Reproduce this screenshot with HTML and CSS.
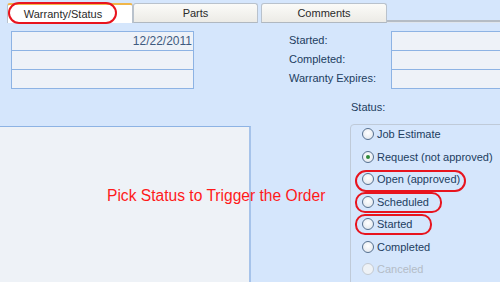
FILE: index.html
```html
<!DOCTYPE html>
<html>
<head>
<meta charset="utf-8">
<link rel="stylesheet" href="styles.css">
</head>
<body>
<div class="page">
  <div class="tabs">
    <div class="tab active">Warranty/Status</div>
    <div class="tab parts">Parts</div>
    <div class="tab comments">Comments</div>
    <div class="tabline"></div>
  </div>
  <div class="row1">
    <div class="fields left">
      <div class="cell date">12/22/2011</div>
      <div class="cell"></div>
      <div class="cell"></div>
    </div>
    <div class="labels">
      <div class="lbl">Started:</div>
      <div class="lbl">Completed:</div>
      <div class="lbl">Warranty Expires:</div>
    </div>
    <div class="fields right">
      <div class="cell"></div>
      <div class="cell"></div>
      <div class="cell"></div>
    </div>
  </div>
  <div class="statuslbl">Status:</div>
  <div class="row3">
    <div class="bigbox"></div>
    <div class="statusbox">
      <div class="opt"><span class="radio"></span>Job Estimate</div>
      <div class="opt"><span class="radio checked"></span>Request (not approved)</div>
      <div class="opt"><span class="radio"></span>Open (approved)</div>
      <div class="opt"><span class="radio"></span>Scheduled</div>
      <div class="opt"><span class="radio"></span>Started</div>
      <div class="opt"><span class="radio"></span>Completed</div>
      <div class="opt disabled"><span class="radio"></span>Canceled</div>
    </div>
  </div>
  <div class="note">Pick Status to Trigger the Order</div>
  <div class="ring r-tab"></div>
  <div class="ring r-open"></div>
  <div class="ring r-sched"></div>
  <div class="ring r-start"></div>
</div>
</body>
</html>
```
FILE: styles.css
```css
html, body {
  margin: 0;
  padding: 0;
}
body {
  background: #d5e6fc;
  font-family: "Liberation Sans", Arial, sans-serif;
  font-size: 11px;
  overflow: hidden;
}
.page {
  position: relative;
  width: 500px;
  height: 282px;
  overflow: hidden;
}
.tabs {
  display: flex;
  align-items: flex-end;
  height: 23px;
  padding-left: 7px;
}
.tab {
  flex-shrink: 0;
  box-sizing: border-box;
  height: 20px;
  width: 126px;
  border: 1px solid #b9c2cc;
  border-radius: 3px 3px 0 0;
  background: linear-gradient(#fbfbf8, #ecebe6);
  color: #2a2a2a;
  text-align: center;
  line-height: 19px;
  font-size: 11px;
  border-bottom: 1px solid #b0b8c0;
}
.tab.active {
  height: 20px;
  background: #ffffff;
  border-top: 2px solid #f0b64a;
  border-bottom: none;
  line-height: 18px;
  width: 126px;
  padding-right: 14px;
}
.tab.parts {
  width: 125px;
}
.tab.comments {
  margin-left: 3px;
  width: 126px;
}
.tabline {
  flex: 1;
  height: 2px;
  background: #b5bcc4;
  border-bottom: 1px solid #dfe5ec;
}
.row1 {
  display: flex;
  margin-top: 8px;
}
.fields {
  flex-shrink: 0;
  box-sizing: border-box;
  border: 1px solid #8db3e4;
  background: #eef2f8;
  display: flex;
  flex-direction: column;
}
.fields.left {
  margin-left: 11px;
  width: 183px;
}
.fields.right {
  width: 115px;
}
.cell {
  height: 18px;
  border-bottom: 1px solid #8db3e4;
  color: #3f5b80;
  font-size: 12px;
  line-height: 19px;
}
.cell:last-child {
  border-bottom: none;
}
.cell.date {
  text-align: right;
  padding-right: 1px;
}
.labels {
  flex-shrink: 0;
  width: 102px;
  margin-left: 95px;
  display: flex;
  flex-direction: column;
  color: #213d5f;
}
.lbl {
  height: 19px;
  line-height: 18px;
}
.statuslbl {
  margin: 11px 0 0 351px;
  color: #213d5f;
  height: 14px;
  line-height: 14px;
}
.row3 {
  display: flex;
  margin-top: 10px;
}
.bigbox {
  flex-shrink: 0;
  box-sizing: border-box;
  width: 251px;
  height: 170px;
  margin-top: 2px;
  background: #eef2f7;
  border-top: 1px solid #8db3e4;
  border-right: 2px solid #a6c3ea;
}
.statusbox {
  flex-shrink: 0;
  box-sizing: border-box;
  margin-left: 99px;
  width: 160px;
  height: 170px;
  border: 1px solid #bfcad8;
  border-radius: 4px;
  padding-top: 3px;
  padding-left: 11px;
}
.opt {
  height: 22.5px;
  display: flex;
  align-items: flex-start;
  line-height: 12px;
  color: #213d5f;
}
.opt.disabled {
  color: #b4bcc6;
}
.radio {
  flex-shrink: 0;
  box-sizing: border-box;
  width: 12px;
  height: 12px;
  border-radius: 50%;
  border: 1px solid #56708f;
  background: radial-gradient(circle at 50% 40%, #ffffff, #dde3ea);
  margin-right: 3px;
  position: relative;
}
.opt.disabled .radio {
  border-color: #c3cad2;
  background: #eef2f6;
}
.radio.checked::after {
  content: "";
  position: absolute;
  left: 3px;
  top: 3px;
  width: 4px;
  height: 4px;
  border-radius: 50%;
  background: #2f8a3a;
}
.note {
  position: absolute;
  left: 107px;
  top: 187px;
  color: #ff1a1a;
  font-size: 15.6px;
  font-family: "Liberation Sans", Arial, sans-serif;
  white-space: nowrap;
}
.ring {
  position: absolute;
  box-sizing: border-box;
  border: 2px solid #e8141e;
}
.r-tab {
  left: 8px;
  top: 2px;
  width: 109px;
  height: 22px;
  border-radius: 14px;
}
.r-open {
  left: 355px;
  top: 170px;
  width: 111px;
  height: 22px;
  border-radius: 11px;
}
.r-sched {
  left: 355px;
  top: 192px;
  width: 87px;
  height: 21px;
  border-radius: 10px;
}
.r-start {
  left: 355px;
  top: 214px;
  width: 77px;
  height: 21px;
  border-radius: 10px;
}
```
